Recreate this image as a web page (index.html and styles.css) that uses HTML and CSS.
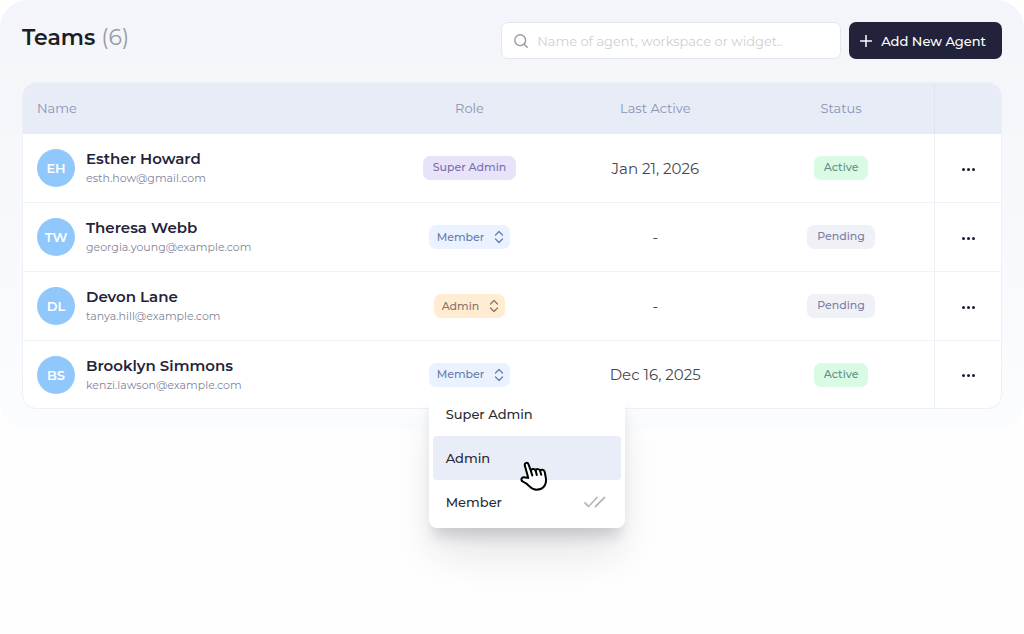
FILE: index.html
```html
<!DOCTYPE html>
<html lang="en">
<head>
    <meta charset="UTF-8">
    <meta name="viewport" content="width=device-width, initial-scale=1.0">
    <title>Teams</title>
    <link rel="stylesheet" href="styles.css">
</head>
<body>
    <main class="panel">
        <header class="toolbar">
            <h1>Teams <span class="count">(6)</span></h1>
            <label class="search">
                <svg width="16" height="16" viewBox="0 0 16 16" aria-hidden="true">
                    <circle cx="7.2" cy="7.2" r="5.4"/>
                    <path d="M11.2 11.2l3 3"/>
                </svg>
                <input type="search" placeholder="Name of agent, workspace or widget.." aria-label="Search agents">
            </label>
            <button type="button" class="add-button">
                <svg width="12" height="12" viewBox="0 0 12 12" aria-hidden="true">
                    <path d="M6 .5v11M.5 6h11"/>
                </svg>
                Add New Agent
            </button>
        </header>

        <table class="team">
            <thead>
                <tr>
                    <th class="col-name">Name</th>
                    <th>Role</th>
                    <th>Last Active</th>
                    <th>Status</th>
                    <th class="col-actions" aria-label="Actions"></th>
                </tr>
            </thead>
            <tbody>
                <tr>
                    <td class="col-name">
                        <div class="person">
                            <span class="avatar">EH</span>
                            <div>
                                <div class="person-name">Esther Howard</div>
                                <div class="person-email">esth.how@gmail.com</div>
                            </div>
                        </div>
                    </td>
                    <td><span class="badge badge-super">Super Admin</span></td>
                    <td class="date">Jan 21, 2026</td>
                    <td><span class="badge badge-active">Active</span></td>
                    <td class="col-actions">
                        <button type="button" class="more" aria-label="More"><i></i><i></i><i></i></button>
                    </td>
                </tr>
                <tr>
                    <td class="col-name">
                        <div class="person">
                            <span class="avatar">TW</span>
                            <div>
                                <div class="person-name">Theresa Webb</div>
                                <div class="person-email">georgia.young@example.com</div>
                            </div>
                        </div>
                    </td>
                    <td>
                        <div class="role">
                            <select class="badge badge-member" aria-label="Role of Theresa Webb">
                                <option>Super Admin</option>
                                <option>Admin</option>
                                <option selected>Member</option>
                            </select>
                            <svg class="updown" width="10" height="14" viewBox="0 0 10 14" aria-hidden="true"><path d="M1.5 5L5 1.5 8.5 5M1.5 9L5 12.5 8.5 9"/></svg>
                        </div>
                    </td>
                    <td class="date">-</td>
                    <td><span class="badge badge-pending">Pending</span></td>
                    <td class="col-actions">
                        <button type="button" class="more" aria-label="More"><i></i><i></i><i></i></button>
                    </td>
                </tr>
                <tr>
                    <td class="col-name">
                        <div class="person">
                            <span class="avatar">DL</span>
                            <div>
                                <div class="person-name">Devon Lane</div>
                                <div class="person-email">tanya.hill@example.com</div>
                            </div>
                        </div>
                    </td>
                    <td>
                        <div class="role">
                            <select class="badge badge-admin" aria-label="Role of Devon Lane">
                                <option>Super Admin</option>
                                <option selected>Admin</option>
                                <option>Member</option>
                            </select>
                            <svg class="updown updown-admin" width="10" height="14" viewBox="0 0 10 14" aria-hidden="true"><path d="M1.5 5L5 1.5 8.5 5M1.5 9L5 12.5 8.5 9"/></svg>
                        </div>
                    </td>
                    <td class="date">-</td>
                    <td><span class="badge badge-pending">Pending</span></td>
                    <td class="col-actions">
                        <button type="button" class="more" aria-label="More"><i></i><i></i><i></i></button>
                    </td>
                </tr>
                <tr>
                    <td class="col-name">
                        <div class="person">
                            <span class="avatar">BS</span>
                            <div>
                                <div class="person-name">Brooklyn Simmons</div>
                                <div class="person-email">kenzi.lawson@example.com</div>
                            </div>
                        </div>
                    </td>
                    <td>
                        <div class="role">
                            <select class="badge badge-member" aria-label="Role of Brooklyn Simmons">
                                <option>Super Admin</option>
                                <option>Admin</option>
                                <option selected>Member</option>
                            </select>
                            <svg class="updown" width="10" height="14" viewBox="0 0 10 14" aria-hidden="true"><path d="M1.5 5L5 1.5 8.5 5M1.5 9L5 12.5 8.5 9"/></svg>
                            <div class="menu">
                                <button type="button">Super Admin</button>
                                <button type="button" class="hovered">
                                    Admin
                                    <svg class="pointer" width="32" height="32" viewBox="0 0 32 32" aria-hidden="true">
                                        <path d="M9.3 18L5.8 5.600C5.2 2.600 8.600 1.800 9.600 4.600l2.400 6.600c0-2.500 3.800-3 4.600-.6.6-2 3.800-2 4.500.2 1-1.800 4-1.400 4.600 1l1 5.500c1 5-.2 9-4.500 11.500-4.500 1.600-8.600.8-11.400-2.200-2-2.200-4-3.800-7.300-5.200-2-1.400-.9-4.400 1.600-4.200 1.600.3 2.900.8 4.200.8z"/>
                                        <path class="knuckles" d="M12 11.200l1.300 4.300M16.600 10.600l1.200 4.400M21.100 10.800l1.100 4"/>
                                    </svg>
                                </button>
                                <button type="button">
                                    Member
                                    <svg class="checks" width="22" height="12" viewBox="0 0 22 12" aria-hidden="true"><path d="M1 7l3.500 3.500L13 1.500M11.500 10.500l9-9"/></svg>
                                </button>
                            </div>
                        </div>
                    </td>
                    <td class="date">Dec 16, 2025</td>
                    <td><span class="badge badge-active">Active</span></td>
                    <td class="col-actions">
                        <button type="button" class="more" aria-label="More"><i></i><i></i><i></i></button>
                    </td>
                </tr>
            </tbody>
        </table>
    </main>
</body>
</html>
```
FILE: styles.css
```css
* {
    box-sizing: border-box;
}
body {
    margin: 0;
    min-height: 100vh;
    background-color: #fefefe;
    font-family: Montserrat, Inter, sans-serif;
    color: #23233b;
}
button, input, select {
    font-family: inherit;
}
svg {
    fill: none;
    stroke-linecap: round;
    stroke-linejoin: round;
}
.panel {
    padding: 22px 22px 21px;
    border-radius: 28px;
    background: linear-gradient(#f3f5fa, #fafcfe);
}
.toolbar {
    display: flex;
    align-items: center;
    gap: 8px;
    margin-bottom: 23px;
}
.toolbar h1 {
    margin: 0 auto 0 0;
    padding-bottom: 5px;
    font-size: 22px;
    line-height: 28px;
    font-weight: 600;
    color: #1d1d24;
}
.count {
    font-weight: 400;
    color: #9a9ba1;
}
.search {
    display: flex;
    align-items: center;
    gap: 8px;
    width: 340px;
    height: 37px;
    padding: 0 11px;
    background-color: #fff;
    border: 1px solid #e2e6f1;
    border-radius: 7px;
}
.search svg {
    flex: none;
    stroke: #9b9b9b;
    stroke-width: 1.4;
}
.search input {
    flex: 1;
    min-width: 0;
    padding: 0;
    border: 0;
    outline: 0;
    background: none;
    font-size: 13px;
}
.search input::placeholder {
    color: #cfcfcf;
}
.add-button {
    display: flex;
    align-items: center;
    justify-content: center;
    gap: 9px;
    height: 37px;
    padding: 0 16px 0 11px;
    border: 0;
    border-radius: 7px;
    background-color: #22233b;
    color: #fff;
    font-size: 13px;
    font-weight: 500;
    cursor: pointer;
}
.add-button svg {
    stroke: #fff;
    stroke-width: 1.5;
}
.team {
    width: 100%;
    table-layout: fixed;
    border-collapse: separate;
    border-spacing: 0;
    border: 1px solid #edf0f6;
    border-radius: 14px;
    background-color: #fff;
}
.team th {
    width: 19%;
    height: 51px;
    padding: 0 0 2px;
    background-color: #e8ecf6;
    color: #8a92b5;
    font-size: 13px;
    font-weight: 400;
}
.team td {
    height: 69px;
    padding: 0;
    border-bottom: 1px solid #f1f3f7;
    text-align: center;
}
.team tr:last-child td {
    height: 67px;
    border-bottom: 0;
}
.team .col-name {
    width: auto;
    padding-left: 14px;
    text-align: left;
}
.team .col-actions {
    width: 67px;
    border-left: 1px solid #eceff5;
}
.team th:first-child {
    border-top-left-radius: 13px;
}
.team th:last-child {
    border-top-right-radius: 13px;
    border-left-color: #dfe4f0;
}
.person {
    display: flex;
    align-items: center;
    gap: 11px;
}
.avatar {
    display: flex;
    align-items: center;
    justify-content: center;
    width: 38px;
    height: 38px;
    border-radius: 50%;
    background-color: #90c8fc;
    color: #fff;
    font-size: 13px;
    font-weight: 600;
}
.person-name {
    font-size: 15px;
    line-height: 20px;
    font-weight: 600;
}
.person-email {
    font-size: 11px;
    line-height: 18px;
    color: #83849a;
}
.team .date {
    font-size: 15px;
    color: #45464e;
}
.badge {
    display: inline-block;
    height: 24px;
    padding: 0 10px;
    border: 0;
    border-radius: 7px;
    font-size: 11px;
    line-height: 23px;
    font-weight: 500;
    vertical-align: middle;
}
.badge-super {
    background-color: #e8e3fa;
    color: #7a6fa8;
}
.badge-active {
    background-color: #d9fbe4;
    color: #5f9085;
}
.badge-pending {
    background-color: #f0f1f6;
    color: #7d7fa6;
}
.role {
    display: inline-block;
    position: relative;
    vertical-align: middle;
}
.role .badge {
    display: block;
    appearance: none;
    field-sizing: content;
    padding: 0 26px 0 8px;
    cursor: pointer;
}
.badge-member {
    background-color: #eaf2ff;
    color: #6c7bab;
}
.badge-admin {
    background-color: #ffecd3;
    color: #8c7468;
}
.updown {
    position: absolute;
    top: 5px;
    right: 6px;
    stroke: #6c7bab;
    stroke-width: 1.3;
    pointer-events: none;
}
.updown-admin {
    stroke: #8c7468;
}
.more {
    display: inline-flex;
    gap: 2px;
    padding: 6px;
    border: 0;
    background: none;
    vertical-align: middle;
    cursor: pointer;
}
.more i {
    width: 3px;
    height: 3px;
    border-radius: 50%;
    background-color: #1c1c30;
}
.menu {
    position: absolute;
    top: 100%;
    left: 0;
    z-index: 1;
    width: 196px;
    margin-top: 5px;
    padding: 0 4px 4px;
    border-radius: 8px;
    background-color: #fff;
    box-shadow: 0 30px 40px -6px rgba(30, 32, 50, 0.12), 0 12px 14px -4px rgba(30, 32, 50, 0.16);
}
.menu button {
    display: flex;
    align-items: center;
    justify-content: space-between;
    position: relative;
    width: 100%;
    height: 44px;
    padding: 0 15px 0 13px;
    border: 0;
    border-radius: 4px;
    background: none;
    color: #2a2a33;
    font-size: 13px;
    font-weight: 500;
    cursor: pointer;
}
.menu .hovered {
    z-index: 1;
    background-color: #e9edf7;
}
.checks {
    stroke: #b9babd;
    stroke-width: 1.8;
}
.pointer {
    position: absolute;
    top: 24px;
    left: 86px;
}
.pointer path {
    fill: #fff;
    stroke: #000;
    stroke-width: 2;
}
.pointer .knuckles {
    fill: none;
}
```
